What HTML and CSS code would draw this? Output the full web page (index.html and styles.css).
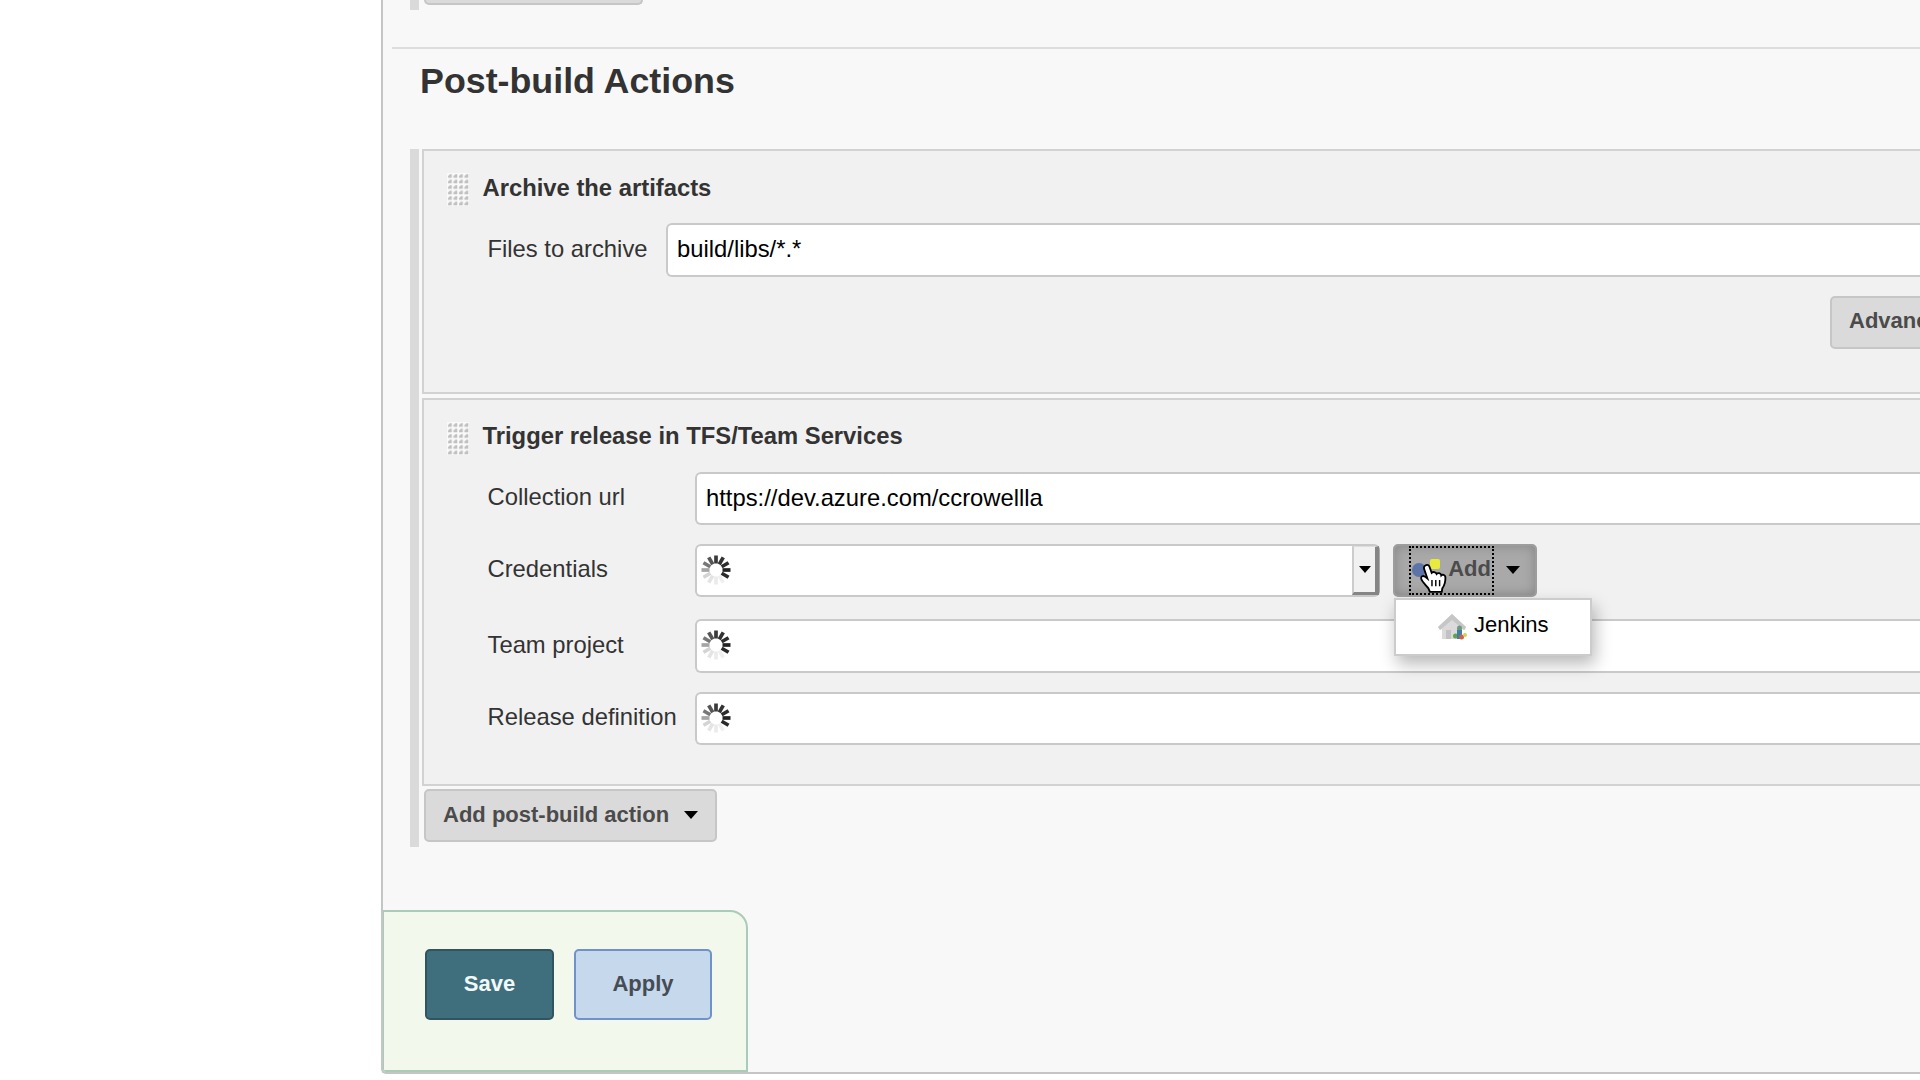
FILE: index.html
```html
<!DOCTYPE html>
<html lang="en">
<head>
<meta charset="utf-8">
<title>Job configuration</title>
<link rel="stylesheet" href="styles.css">
</head>
<body>
<svg class="defs" width="0" height="0">
  <defs>
    <pattern id="dots" width="5.5" height="5.5" patternUnits="userSpaceOnUse">
      <path d="M1 4.8V3L3 1.200H4.800V4.800Z" fill="#c0c0c0"/>
    </pattern>
    <symbol id="grip" viewBox="0 0 22 33">
      <rect width="22" height="33" fill="#fafafa"/>
      <rect width="22" height="33" fill="url(#dots)"/>
    </symbol>
    <symbol id="spinner" viewBox="-15 -15 30 30">
      <g stroke-width="3.7">
        <path d="M0-6.500V-14.500" stroke="#3a3a3a"/>
        <path d="M0-6.500V-14.500" stroke="#333" transform="rotate(30)"/>
        <path d="M0-6.500V-14.500" stroke="#2c2c2c" transform="rotate(60)"/>
        <path d="M0-6.500V-14.500" stroke="#222" transform="rotate(90)"/>
        <path d="M0-6.500V-14.500" stroke="#2a2a2a" transform="rotate(120)"/>
        <path d="M0-6.500V-14.500" stroke="#f0f0f0" transform="rotate(150)"/>
        <path d="M0-6.500V-14.500" stroke="#ebebeb" transform="rotate(180)"/>
        <path d="M0-6.500V-14.500" stroke="#e4e4e4" transform="rotate(210)"/>
        <path d="M0-6.500V-14.500" stroke="#d4d4d4" transform="rotate(240)"/>
        <path d="M0-6.500V-14.500" stroke="#a5a5a5" transform="rotate(270)"/>
        <path d="M0-6.500V-14.500" stroke="#777" transform="rotate(300)"/>
        <path d="M0-6.500V-14.500" stroke="#555" transform="rotate(330)"/>
      </g>
    </symbol>
    <symbol id="caret" viewBox="0 0 14 8"><path d="M0 0H14L7 8Z" fill="#000"/></symbol>
  </defs>
</svg>
<main class="panel">
  <div class="group group-prev"><div class="btn btn-prev"></div></div>
  <h1 class="heading">Post-build Actions</h1>
  <section class="group group-main">
    <div class="block block-archive">
      <h2 class="title"><svg class="grip"><use href="#grip"/></svg>Archive the artifacts</h2>
      <div class="row archive-row">
        <label class="label">Files to archive</label>
        <div class="field">build/libs/*.*</div>
      </div>
      <div class="advanced"><button class="btn">Advanced...</button></div>
    </div>
    <div class="block block-trigger">
      <h2 class="title"><svg class="grip"><use href="#grip"/></svg>Trigger release in TFS/Team Services</h2>
      <div class="row">
        <label class="label">Collection url</label>
        <div class="field">https://dev.azure.com/ccrowellla</div>
      </div>
      <div class="row row-cred">
        <label class="label">Credentials</label>
        <div class="field select">
          <svg class="spinner"><use href="#spinner"/></svg>
          <span class="drop"><svg class="drop-caret"><use href="#caret"/></svg></span>
        </div>
        <div class="add-wrap">
          <button class="add"><span class="add-focus">Add</span><svg class="caret"><use href="#caret"/></svg></button>
          <svg class="cred-icon" viewBox="0 0 64 64">
            <ellipse cx="29" cy="31" rx="7" ry="7" fill="#5c74a8"/>
            <rect x="40" y="20" width="10" height="10" rx="2" fill="#e8ea3c"/>
          </svg>
          <svg class="pointer" viewBox="0 0 28 30">
            <path d="M7.3 2C5.3 2.700 4.900 4.300 5.500 6L8.600 15L6.300 13.200C4.300 11.800 2 13 2.600 15.200C3.800 18.700 7.300 21.500 9.600 24.600L11 28H22.500L23 24.500C25.300 21.500 26.200 18 26 13.700C25.800 11.300 23 10.800 22 12C21.600 9.500 18.500 9.200 17.500 10.600C16.600 8.500 14 8.200 12.700 9.500L10.600 3.600C10 2.200 8.700 1.500 7.300 2Z" fill="#fff" stroke="#000" stroke-width="1.8"/>
            <path d="M13 16.500V22.500M16.700 16.500V22.500M20.400 16.500V22.500" stroke="#000" stroke-width="1.400"/>
          </svg>
          <div class="menu">
            <svg class="house" viewBox="0 0 30 30">
              <path d="M15 2L1 15L3 18L5 17V27H24V17L28 18L29 15Z" fill="#dadada"/>
              <path d="M15 2L1 15L3 18L15 8L27 18L29 15Z" fill="#c6c6c6"/>
              <path d="M9 18H14V27H9Z" fill="#c2c2c2"/>
              <ellipse cx="22.500" cy="16.500" rx="2.500" ry="3" fill="#6b9a7d"/>
              <circle cx="18.500" cy="24" r="2.500" fill="#64a050"/>
              <path d="M20 18H25V27H20Z" fill="#3f7fa6"/>
              <circle cx="24.500" cy="25" r="2.500" fill="#cf5f4a"/>
              <circle cx="28" cy="23" r="2" fill="#d8cf45"/>
            </svg>
            <span>Jenkins</span>
          </div>
        </div>
      </div>
      <div class="row row-team">
        <label class="label">Team project</label>
        <div class="field"><svg class="spinner"><use href="#spinner"/></svg></div>
      </div>
      <div class="row row-release">
        <label class="label">Release definition</label>
        <div class="field"><svg class="spinner"><use href="#spinner"/></svg></div>
      </div>
    </div>
    <button class="btn">Add post-build action<svg class="caret"><use href="#caret"/></svg></button>
  </section>
  <footer class="actions">
    <button class="save">Save</button>
    <button class="apply">Apply</button>
  </footer>
</main>
</body>
</html>
```
FILE: styles.css
```css
* { box-sizing: border-box; }
body {
  margin: 0;
  height: 1080px;
  overflow: hidden;
  background: #fff;
  color: #333;
  font-family: "Liberation Sans", Arial, sans-serif;
  font-size: 23.8px;
}
button { font: inherit; margin: 0; }
svg { display: block; flex: none; }
.defs { position: absolute; }
.panel {
  display: flex;
  flex-direction: column;
  margin-left: 381px;
  height: 1074px;
  overflow: hidden;
  background: #f8f8f8;
  border: solid #c3c6c4;
  border-width: 0 0 2px 2px;
  border-bottom-left-radius: 5px;
}
.group {
  margin-left: 27px;
  border-left: 9px solid #dadada;
  padding-left: 4px;
}
.group-prev { height: 10px; }
.group-main { padding-bottom: 5px; }
.btn {
  display: flex;
  align-items: center;
  gap: 15px;
  height: 53px;
  padding: 0 16px 2px;
  margin-left: 1px;
  border: 2px solid #c6c6c6;
  border-radius: 5px;
  background: #dadada;
  color: #4b4b4b;
  font-size: 22px;
  font-weight: bold;
  white-space: nowrap;
}
.group-main > .btn { padding: 0 17px 1px 17px; }
.btn-prev { width: 219px; height: 5px; border-top: 0; border-radius: 0 0 5px 5px; padding: 0; }
.heading {
  margin: 37px 0 0 9px;
  height: 102px;
  padding: 11px 0 0 28px;
  border-top: 2px solid #dcdcdc;
  font-size: 35.8px;
  line-height: 42px;
}
.block {
  margin-left: -1px;
  border: solid #d2d2d2;
  border-width: 2px 0 2px 2px;
  background: #f1f1f1;
}
.block-archive { height: 245px; margin-bottom: 4px; }
.block-trigger { height: 388px; margin-bottom: 3px; }
.title {
  display: flex;
  gap: 14px;
  margin: 0;
  padding: 21px 0 0 22.5px;
  height: 72px;
  font-size: 23.8px;
  line-height: 29px;
}
.block-archive .title { padding-top: 22px; }
.grip { width: 22px; height: 33px; }
.block-trigger .grip { margin-top: 1px; }
.row { display: grid; grid-template-columns: 208px 1fr; padding-left: 63px; height: 53px; }
.archive-row { grid-template-columns: 179px 1fr; }
.label { padding: 10px 0 0; line-height: 29px; }
.label { padding-left: 0.5px; }
.archive-row .label, .row-team .label { padding-top: 11px; }
.field {
  display: flex;
  align-items: center;
  height: 53px;
  padding: 0 0 2px 9px;
  border: 2px solid #c9c9c9;
  border-right: 0;
  border-radius: 6px 0 0 6px;
  background: #fff;
  color: #000;
  font-size: 23.8px;
}
.archive-row .field, .row-team .field { height: 54px; padding-bottom: 2px; }
.advanced { display: flex; margin: 20px 0 0 1406px; }
.advanced .btn { padding: 0 16px 4px 17px; margin-left: 0; }
.row-cred { grid-template-columns: 208px 685px 1fr; margin-top: 19px; }
.row-team { margin-top: 22px; }
.row-release { margin-top: 20px; }
.spinner { width: 30px; height: 30px; margin-left: -5px; }
.select { padding-right: 0; padding-bottom: 1px; border-right: 1px solid #aaa; border-radius: 6px; }
.drop {
  display: flex;
  align-items: center;
  justify-content: center;
  width: 27px;
  height: 49px;
  margin-left: auto;
  border: solid;
  border-width: 1px 4px 3px 2px;
  border-color: #ddd #858585 #858585 #ccc;
  background: #f1f1f1;
}
.drop-caret { width: 12px; height: 7px; }
.caret { width: 14px; height: 8px; }
.add-wrap { position: relative; margin-left: 13px; }
.add {
  display: flex;
  align-items: center;
  gap: 12px;
  width: 144px;
  height: 53px;
  padding: 0 0 1px 14px;
  border: 2px solid #9d9d9d;
  border-radius: 5px;
  background: #a9a9a9;
  box-shadow: inset 0 0 12px #858585;
  color: #4b4b4b;
  font-size: 22px;
  font-weight: bold;
}
.add-focus {
  width: 85px;
  height: 49px;
  padding-right: 1px;
  border: 2px dotted #000;
  line-height: 42px;
  text-align: right;
}
.cred-icon { position: absolute; left: -3px; top: -5px; width: 64px; height: 64px; }
.pointer { position: absolute; left: 25px; top: 19px; width: 30px; height: 31px; }
.menu {
  position: absolute;
  z-index: 1;
  left: 1px;
  top: 54px;
  display: flex;
  align-items: center;
  gap: 7px;
  width: 198px;
  height: 58px;
  padding: 0 0 4px 41px;
  border: 2px solid #ccc;
  background: #fff;
  box-shadow: 3px 8px 16px rgba(0, 0, 0, .28);
  color: #000;
  font-size: 22px;
}
.house { width: 30px; height: 30px; margin-top: 3px; }
.actions {
  display: flex;
  flex: none;
  gap: 20px;
  width: 366px;
  height: 162px;
  margin: auto 0 0 -1px;
  padding: 37px 0 0 41px;
  border: 2px solid #a9ccb8;
  border-top-right-radius: 18px;
  background: #f2f8ec;
}
.save, .apply {
  height: 71px;
  padding: 0 0 1px;
  border: 2px solid #32545f;
  border-radius: 5px;
  background: #3f6f7d;
  color: #f2f8f8;
  font-size: 22px;
  font-weight: bold;
}
.save { width: 129px; }
.apply { width: 138px; border-color: #6f93c9; background: #c6d8ec; color: #454c54; }
```
